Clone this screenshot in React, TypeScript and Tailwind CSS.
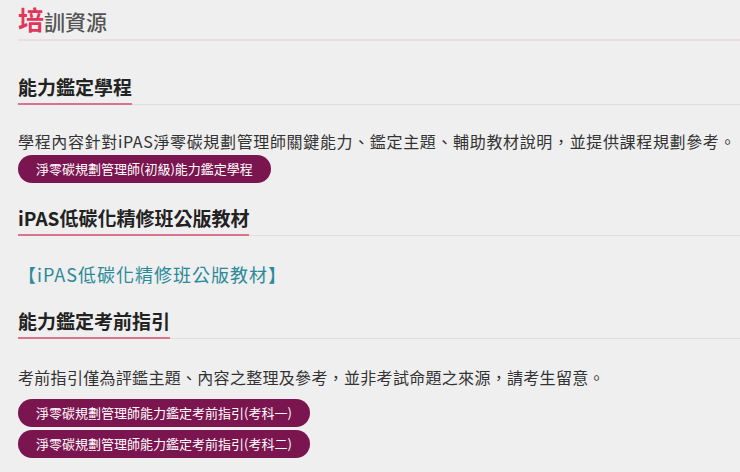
const font = { fontFamily: '"Noto Sans CJK TC", "Noto Sans", sans-serif' };

const SectionTitle = ({ children }: { children: React.ReactNode }) => (
  <div className="border-b border-[#dedede]">
    <h3 className="inline-block text-[19px] font-bold text-[#222] leading-[26px] pb-[3px] border-b-2 border-[#d9738f] -mb-px">
      {children}
    </h3>
  </div>
);

const PillButton = ({ children }: { children: React.ReactNode }) => (
  <a
    href="#"
    className="inline-block bg-[#7a1550] text-white text-[13px] leading-[28px] h-[28px] px-[18px] rounded-full"
  >
    {children}
  </a>
);

export default function App() {
  return (
    <div className="min-h-screen w-[740px] h-[472px] overflow-hidden bg-[#efefef] pl-[18px]" style={font}>
      {/* 🔹 Page title */}
      <div className="pt-[3px] border-b-2 border-[#ecdde1]">
        <h2 className="leading-[32px] pb-0">
          <span className="text-[26px] font-semibold text-[#e0355c]">培</span>
          <span className="text-[21px] font-medium text-[#555]">訓資源</span>
        </h2>
      </div>

      {/* 🔹 能力鑑定學程 */}
      <div className="mt-[33px]">
        <SectionTitle>能力鑑定學程</SectionTitle>
        <p className="mt-[24px] text-[16px] leading-[24px] text-[#333] tracking-[0.65px] whitespace-nowrap">
          學程內容針對iPAS淨零碳規劃管理師關鍵能力、鑑定主題、輔助教材說明，並提供課程規劃參考。
        </p>
        <div className="mt-[2px]">
          <PillButton>淨零碳規劃管理師(初級)能力鑑定學程</PillButton>
        </div>
      </div>

      {/* 🔹 iPAS低碳化精修班公版教材 */}
      <div className="mt-[22px]">
        <SectionTitle>iPAS低碳化精修班公版教材</SectionTitle>
        <a href="#" className="block mt-[24px] text-[18px] leading-[28px] text-[#2b8a99] tracking-[1px]">
          【iPAS低碳化精修班公版教材】
        </a>
      </div>

      {/* 🔹 能力鑑定考前指引 */}
      <div className="mt-[20px]">
        <SectionTitle>能力鑑定考前指引</SectionTitle>
        <p className="mt-[26px] text-[16px] leading-[24px] text-[#333] tracking-[0.3px] whitespace-nowrap">
          考前指引僅為評鑑主題、內容之整理及參考，並非考試命題之來源，請考生留意。
        </p>
        <div className="mt-[10px] flex flex-col items-start gap-[3px]">
          <PillButton>淨零碳規劃管理師能力鑑定考前指引(考科一)</PillButton>
          <PillButton>淨零碳規劃管理師能力鑑定考前指引(考科二)</PillButton>
        </div>
      </div>
    </div>
  );
}
